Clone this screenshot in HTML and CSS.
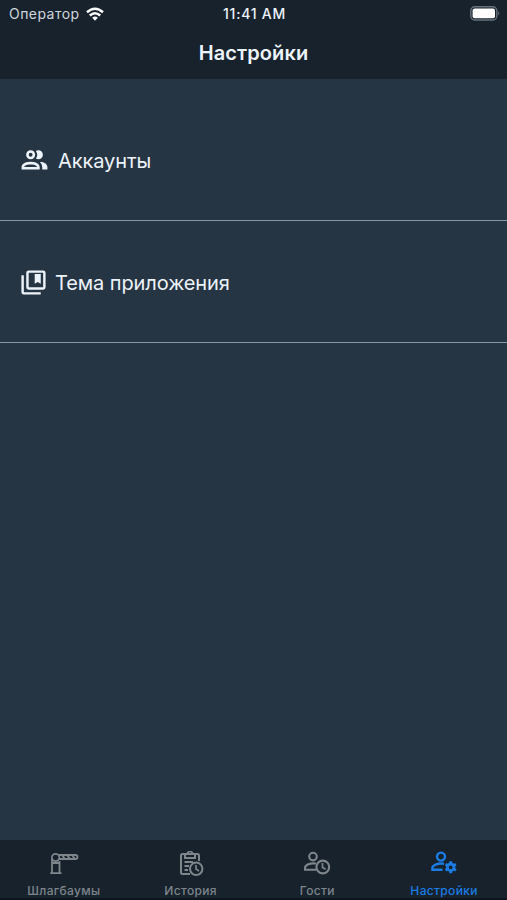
FILE: index.html
```html
<!DOCTYPE html>
<html lang="ru">
<head>
    <meta charset="UTF-8">
    <meta name="viewport" content="width=device-width, initial-scale=1.0">
    <title>Настройки</title>
    <link rel="stylesheet" href="styles.css">
</head>
<body>
    <header class="header">
        <div class="status">
            <div class="carrier">
                <span>Оператор</span>
                <svg class="wifi" viewBox="0 0 18 14" fill="none" stroke="#fff" stroke-width="2.5">
                    <path d="M1 5.3Q9-1.7 17 5.3"/>
                    <path d="M3.8 8.5Q9 4 14.2 8.5"/>
                    <path d="M9 13.7L6.2 10.8Q9 8.4 11.8 10.8Z" fill="#fff" stroke="none"/>
                </svg>
            </div>
            <span class="time">11:41 AM</span>
            <svg class="battery" viewBox="0 0 31 15">
                <rect x=".8" y=".8" width="26" height="13.2" rx="4" fill="none" stroke="#68717b" stroke-width="1.4"/>
                <rect x="2.6" y="2.6" width="22.4" height="9.6" rx="2" fill="#fff"/>
                <path d="M28.2 5.2Q30.4 7.4 28.2 9.6Z" fill="#68717b"/>
            </svg>
        </div>
        <h1 class="title">Настройки</h1>
    </header>

    <main class="menu">
        <a class="item accounts">
            <svg class="icon" viewBox="0 0 24 24" fill="currentColor">
                <path d="M13.07 10.41A5 5 0 0 0 13.07 4.59A3.39 3.39 0 0 1 15 4A3.5 3.5 0 0 1 15 11A3.39 3.39 0 0 1 13.07 10.41M5.5 7.5A3.5 3.5 0 1 1 9 11A3.5 3.5 0 0 1 5.5 7.5M7.5 7.5A1.5 1.5 0 1 0 9 6A1.5 1.5 0 0 0 7.5 7.5M16 17V19H2V17S2 13 9 13 16 17 16 17M14 17C13.86 16.22 12.67 15 9 15S4.07 16.31 4 17M15.95 13A5.32 5.32 0 0 1 18 17V19H22V17S22 13.37 15.94 13Z"/>
            </svg>
            <span>Аккаунты</span>
        </a>
        <a class="item theme">
            <svg class="icon" viewBox="0 0 24 24" fill="none" stroke="currentColor" stroke-width="2">
                <path d="M3 6V20Q3 21 4 21H18"/>
                <rect x="7" y="3" width="14" height="14" rx="1"/>
                <path d="M13 5H18V13L15.5 11.5L13 13Z" fill="currentColor" stroke="none"/>
            </svg>
            <span>Тема приложения</span>
        </a>
    </main>

    <nav class="tabs">
        <a class="tab barriers">
            <svg viewBox="0 0 30 26" fill="none" stroke="currentColor" stroke-width="1.8">
                <path d="M1.2 22.2H12.5M3 22V7.5M10.5 22V10M3 12H10.5"/>
                <circle cx="6.6" cy="6.5" r="3.7"/>
                <path d="M10 4H26.5Q28.5 4 28.5 6T26.5 8H10"/>
                <path d="M13 4L16 8M18 4L21 8M23 4L26 8" stroke-width="2"/>
            </svg>
            <span>Шлагбаумы</span>
        </a>
        <a class="tab history">
            <svg viewBox="0 0 30 26" fill="none" stroke="currentColor" stroke-width="2">
                <path d="M14 23H6.5Q5 23 5 21.5V4.5Q5 3 6.5 3H21.5Q23 3 23 4.5V10"/>
                <path d="M9 3V7H19V3M8.5 11H17M8.5 15H13M8.5 19H12"/>
                <path d="M11.3 3.2A2.7 2.7 0 0 1 16.7 3.2" stroke-width="1.7"/>
                <circle cx="20.2" cy="17.8" r="6.2"/>
                <path d="M20 14V18L23 20" stroke-width="1.7"/>
            </svg>
            <span>История</span>
        </a>
        <a class="tab guests">
            <svg viewBox="0 0 30 26" fill="none" stroke="currentColor" stroke-width="2.1">
                <circle cx="11" cy="5.6" r="3.8"/>
                <path d="M14 12.5C8 11.7 3 14 3 17V18.7H14"/>
                <circle cx="20.8" cy="16" r="6.4"/>
                <path d="M20.5 12V16.4L23.7 18.3" stroke-width="1.7"/>
            </svg>
            <span>Гости</span>
        </a>
        <a class="tab settings active">
            <svg viewBox="0 0 30 26" fill="none" stroke="currentColor" stroke-width="2.4">
                <circle cx="12" cy="5.6" r="4"/>
                <path d="M15 12.7C8 12 3.4 14.5 3.4 17V18.7H13.5"/>
                <circle cx="21.7" cy="16.3" r="3.3" stroke-width="2.8"/>
                <path d="M21.7 10.3V13M21.7 19.6V22.3M16.5 13.3L18.8 14.6M24.6 18L26.9 19.3M16.5 19.3L18.8 18M24.6 14.6L26.9 13.3" stroke-width="2.9"/>
            </svg>
            <span>Настройки</span>
        </a>
    </nav>
</body>
</html>
```

FILE: styles.css
```css
* {
    box-sizing: border-box;
}
body {
    margin: 0;
    height: 900px;
    display: flex;
    flex-direction: column;
    overflow: hidden;
    background-color: #263543;
    color: #edf3fa;
    font-family: Inter, "Noto Sans", sans-serif;
}
svg {
    display: block;
    flex-shrink: 0;
}
.header {
    height: 79px;
    background-color: #17222d;
}
.status {
    height: 27px;
    padding: 0 6px 0 9px;
    display: grid;
    grid-template-columns: 1fr auto 1fr;
    align-items: center;
    font-size: 14px;
}
.carrier {
    display: flex;
    align-items: center;
    gap: 6px;
    color: #cfd6dd;
    letter-spacing: 0.45px;
}
.wifi {
    width: 18px;
    height: 14px;
}
.time {
    margin-right: 1px;
    font-size: 14px;
    font-weight: 500;
    letter-spacing: 0.75px;
}
.battery {
    width: 31px;
    height: 15px;
    justify-self: end;
}
.title {
    margin: 0;
    text-align: center;
    font-size: 20px;
    font-weight: 600;
    line-height: 52px;
    letter-spacing: 0.1px;
}
.menu {
    flex: 1;
    padding-top: 20px;
}
.item {
    height: 122px;
    padding: 2px 0 0 19px;
    display: flex;
    align-items: center;
    border-bottom: 1px solid #8b96a1;
    font-size: 20px;
    letter-spacing: -0.1px;
}
.accounts .icon {
    width: 31px;
    height: 31px;
    margin-right: 8px;
}
.theme .icon {
    width: 29px;
    height: 29px;
    margin-right: 7px;
}
.tabs {
    height: 60px;
    display: grid;
    grid-template-columns: repeat(4, 1fr);
    background-color: #17222d;
    border-bottom: 2px solid #10141e;
}
.tab {
    padding: 11px 0 0 1px;
    display: flex;
    flex-direction: column;
    align-items: center;
    color: #7e858b;
    font-size: 12px;
    font-weight: 500;
    line-height: 16px;
    letter-spacing: 0.35px;
}
.tab svg {
    width: 30px;
    height: 26px;
    margin-bottom: 6px;
}
.active {
    color: #1b7ce5;
}
```
